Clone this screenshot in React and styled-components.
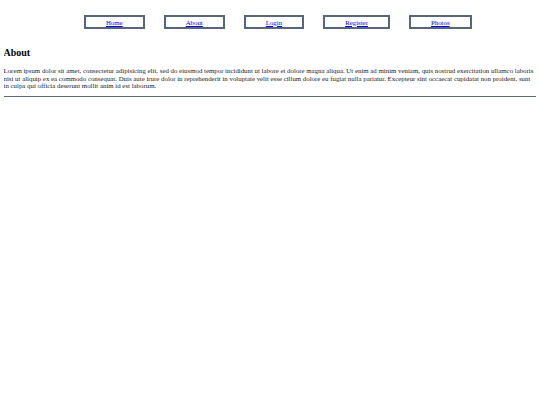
import React from 'react'
import styled, { createGlobalStyle } from 'styled-components'

const GlobalStyle = createGlobalStyle`
  body {
    margin: 4px 4px 4px 3.5px;
    font-family: "Liberation Serif", "Times New Roman", serif;
    font-size: 6.85px;
    color: #222;
    background: #fff;
  }
`;

const links = ['Home', 'About', 'Login', 'Register', 'Photos'];

const App = () => {
  return (
    <>
      <GlobalStyle />
      <SNav>
        <SMenu>
          {links.map(label => (
            <SItem key={label}>
              <SLink href="#">{label}</SLink>
            </SItem>
          ))}
        </SMenu>
      </SNav>
      <STitle>About</STitle>
      <SP>
        Lorem ipsum dolor sit amet, consectetur adipisicing elit, sed do eiusmod tempor incididunt ut labore et dolore magna aliqua. Ut enim ad minim veniam, quis nostrud exercitation ullamco laboris nisi ut aliquip ex ea commodo consequat. Duis aute irure dolor in reprehenderit in voluptate velit esse cillum dolore eu fugiat nulla pariatur. Excepteur sint occaecat cupidatat non proident, sunt in culpa qui officia deserunt mollit anim id est laborum.
      </SP>
      <SRule />
    </>
  )
}

export default App

const SNav = styled.nav`
  padding-top: 11px;
`;

const SMenu = styled.ul`
  display: flex;
  justify-content: center;
  gap: 19px;
  list-style: none;
  margin: 0;
  padding: 0 0 0 16px;
`;

const SItem = styled.li`
  display: flex;
  align-items: center;
  justify-content: center;
  height: 10px;
  padding: 0 20px;
  border: 2px solid #56667c;
`;

const SLink = styled.a`
  color: #0000ee;
  font-size: 6.85px;
`;

const STitle = styled.h2`
  font-size: 10px;
  color: #000;
  margin: 18px 0 9px;
`;

const SP = styled.p`
  margin: 0;
  line-height: 7.5px;
`;

const SRule = styled.hr`
  margin: 6px 0 0;
  border: none;
  border-top: 1.5px solid #5c6d82;
  height: 0;
`;
